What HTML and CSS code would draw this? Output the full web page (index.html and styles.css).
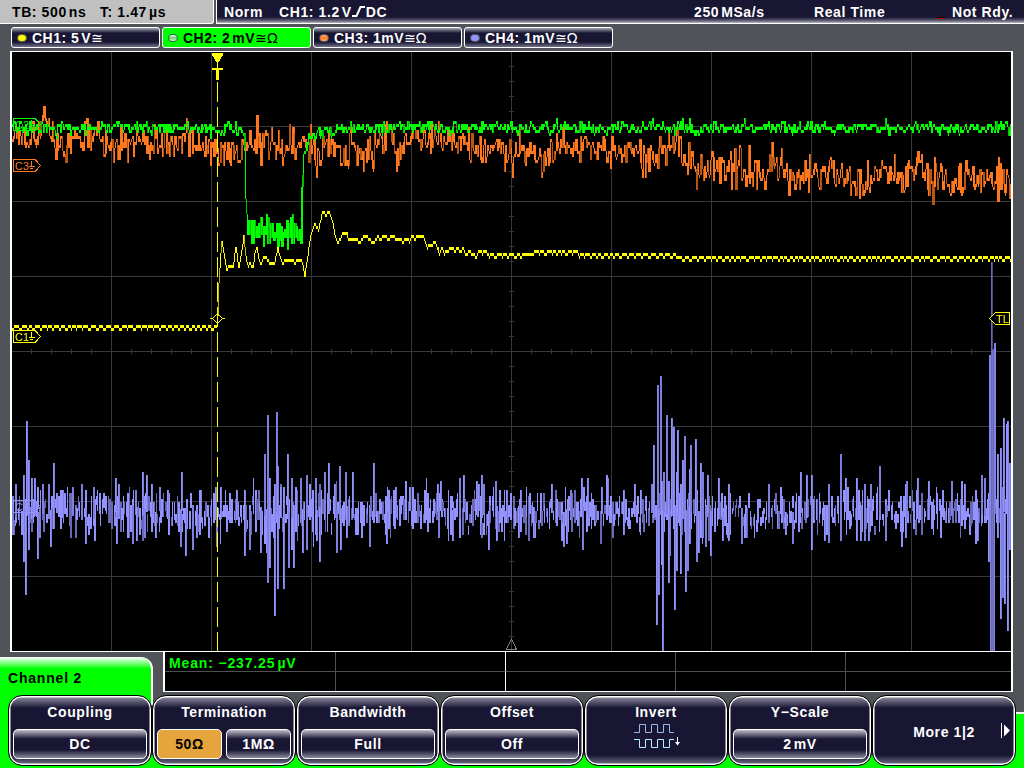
FILE: index.html
```
<!DOCTYPE html>
<html>
<head>
    <meta charset="utf-8">
    <title>Oscilloscope</title>
    <link rel="stylesheet" href="styles.css">
</head>
<body>
    <div class="status">
        <div class="timebase"><span>TB: 500<i></i>ns</span><span>T: 1.47<i></i>µs</span></div>
        <div class="acquisition">
            <span>Norm</span>
            <span class="trigger">CH1: 1.2<i></i>V<svg width="13" height="11" viewBox="0 0 13 11"><path d="M0 10H4.5L8.5 1H13"/></svg>DC</span>
            <span>250<i></i>MSa/s</span>
            <span>Real Time</span>
            <span class="ready"><b class="lamp"></b>Not Rdy.</span>
        </div>
    </div>

    <div class="channels">
        <div class="channel ch1"><b class="led"></b><span>CH1: 5<i></i>V</span><em>≅</em></div>
        <div class="channel ch2 active"><b class="led"></b><span>CH2: 2<i></i>mV</span><em>≅Ω</em></div>
        <div class="channel ch3"><b class="led"></b><span>CH3: 1mV</span><em>≅Ω</em></div>
        <div class="channel ch4"><b class="led"></b><span>CH4: 1mV</span><em>≅Ω</em></div>
    </div>

    <div class="screen">
        <canvas id="traces" width="999" height="599"></canvas>
        <svg class="markers" width="999" height="599" viewBox="12 52 999 599">
            <!-- trigger time -->
            <path class="cursor" d="M217.5 82V651"/>
            <path class="yellow-fill" d="M212 53H223V55L218 63V68H223V70H219V80H216V70H212V68H217V63L212 55Z"/>
            <path class="yellow" d="M217.5 313.5L222.5 318.5L217.5 323.5L212.5 318.5ZM210 318.5H213M222 318.5H225"/>
            <!-- trigger level -->
            <path class="yellow box" d="M989.5 318.5L995.5 312.5H1009.5V324.5H995.5Z"/>
            <text class="yellow-text" x="996" y="323">TL</text>
            <!-- reference point -->
            <path class="reference" d="M511.5 639L516.5 649.5H506.5Z"/>
            <g class="flag green" transform="translate(13 118)">
                <path d="M.5 .5H22L27.5 6.5L22 12.5H.5ZM18.5 2V7M15.5 7.5H21.5M17 9.5H20"/><text x="2" y="10.5">C2</text>
            </g>
            <g class="flag orange" transform="translate(13 159)">
                <path d="M.5 .5H22L27.5 6.5L22 12.5H.5ZM18.5 2V7M15.5 7.5H21.5M17 9.5H20"/><text x="2" y="10.5">C3</text>
            </g>
            <g class="flag yellow" transform="translate(13 330)">
                <path d="M.5 .5H22L27.5 6.5L22 12.5H.5ZM18.5 2V7M15.5 7.5H21.5M17 9.5H20"/><text x="2" y="10.5">C1</text>
            </g>
            <g class="flag blue" transform="translate(13 500)">
                <path d="M.5 .5H22L27.5 6.5L22 12.5H.5ZM18.5 2V7M15.5 7.5H21.5M17 9.5H20"/><text x="2" y="10.5">C4</text>
            </g>
        </svg>
    </div>

    <div class="bottom">
        <div class="menu-title">Channel 2</div>
        <div class="measurements">
            <div class="mean">Mean: −237.25<i></i>µV</div><div></div><div></div><div></div><div></div>
            <div></div><div></div><div></div><div></div><div></div>
        </div>
    </div>

    <div class="softkeys">
        <div class="softkey"><span>Coupling</span><div class="values"><div>DC</div></div></div>
        <div class="softkey"><span>Termination</span><div class="values"><div class="selected">50Ω</div><div>1MΩ</div></div></div>
        <div class="softkey"><span>Bandwidth</span><div class="values"><div>Full</div></div></div>
        <div class="softkey"><span>Offset</span><div class="values"><div>Off</div></div></div>
        <div class="softkey"><span>Invert</span>
            <svg class="wave" width="48" height="27" viewBox="0 0 48 27">
                <path class="normal" d="M0 8.5H5.5V.5H11.5V8.5H17.5V.5H23.5V8.5H29.5V.5H35.5V8.5H40"/>
                <path class="inverted" d="M0 15.5H5.5V23.5H11.5V15.5H17.5V23.5H23.5V15.5H29.5V23.5H35.5V15.5H40"/>
                <path class="arrow" d="M43.5 13V20"/><path class="arrowhead" d="M41 18H46L43.5 21.5Z"/>
            </svg>
        </div>
        <div class="softkey"><span>Y−Scale</span><div class="values"><div>2<i></i>mV</div></div></div>
        <div class="softkey more"><span>More 1|2</span>
            <svg width="9" height="15" viewBox="0 0 9 15"><path d="M.5 0V15" stroke="#fff"/><path d="M3 1.5L9 7.5L3 13.5Z" fill="#fff"/></svg>
        </div>
    </div>

    <script src="script.js"></script>
</body>
</html>
```
FILE: styles.css
```
* {
    box-sizing: border-box;
}

body {
    margin: 0;
    width: 1024px;
    height: 768px;
    overflow: hidden;
    background: #505458;
    color: #fff;
    font: bold 14px/16px "Liberation Sans", Arial, sans-serif;
    letter-spacing: 0.6px;
    white-space: nowrap;
}

/* narrow gap between a number and its unit */
i {
    display: inline-block;
    width: 2px;
}

/* Top status line */
.status {
    display: flex;
    gap: 2px;
    height: 24px;
}

.timebase {
    display: grid;
    grid-template-columns: 88px 1fr;
    width: 214px;
    padding: 4px 0 0 12px;
    color: #000;
    background: #c0c0c0;
    border-right: 1px solid #fff;
    border-bottom: 1px solid #fff;
    border-radius: 0 0 3px 0;
}

.acquisition {
    flex: 1;
    display: grid;
    grid-template-columns: 55px 415px 120px 123px 1fr;
    padding: 4px 0 0 7px;
    background: linear-gradient(#181633 17px, #3a3852 19px, #8b8a99 22px, #c8c7d0 23px);
    border-left: 1px solid #fff;
    border-bottom: 1px solid #fff;
}

.trigger svg {
    margin-right: 1px;
}

.trigger path {
    fill: none;
    stroke: #fff;
    stroke-width: 2;
}

.lamp {
    display: inline-block;
    width: 8px;
    height: 2px;
    margin-right: 7px;
    background: #c00000;
    border-top: 1px solid #000;
    vertical-align: -2px;
}

/* Channel tabs */
.channels {
    display: flex;
    gap: 2px;
    height: 27px;
    padding: 3px 0 3px 11px;
}

.channel {
    display: flex;
    align-items: center;
    width: 149px;
    height: 21px;
    padding-left: 5px;
    border: 1px solid #fff;
    border-radius: 3px;
    background: linear-gradient(#a5a4b2, #181633 5px, #181633 14px, #74738a);
    letter-spacing: 0.5px;
}

.channel.active {
    color: #000;
    background: #0f0;
}

.channel em {
    font: 14px/16px "DejaVu Sans", sans-serif;
    letter-spacing: 0;
}

.led {
    width: 10px;
    height: 8px;
    margin-right: 5px;
    border: 1px solid #555;
    border-radius: 4px;
}

.ch1 .led { background: #ff0; }
.ch2 .led { background: linear-gradient(#fff, #6c6 50%, #dfd); border-color: #264; }
.ch3 .led { background: linear-gradient(#ffb080, #ff781e 50%, #ffb080); }
.ch4 .led { background: #9393ff; }

/* Graticule */
.screen {
    position: relative;
    width: 1003px;
    height: 601px;
    margin-left: 10px;
    border: solid #fff;
    border-width: 1px 2px;
    background: #000;
}

.screen canvas {
    display: block;
}

.markers {
    position: absolute;
    top: 0;
    left: 0;
    shape-rendering: crispEdges;
    letter-spacing: 0;
}

.markers path {
    fill: none;
    stroke-width: 1;
}

.markers text {
    font: 11px "Liberation Sans", Arial, sans-serif;
}

.markers .cursor {
    stroke: #ff0;
    stroke-dasharray: 20 5;
}

.markers .yellow-fill { fill: #ff0; }
.markers .box { fill: #000; }
.markers .yellow { stroke: #ff0; }
.markers .reference { stroke: #808080; }
.yellow-text { fill: #ff0; }
.flag text { stroke: none; }
.green { stroke: #0f0; fill: #0f0; }
.orange { stroke: #ff781e; fill: #ff781e; }
.flag.yellow { fill: #ff0; }
.blue { stroke: #9393ff; fill: #9393ff; }

/* Menu title and measurements */
.bottom {
    display: flex;
    justify-content: space-between;
    height: 43px;
    padding-right: 11px;
}

.menu-title {
    width: 153px;
    height: 48px;
    margin-top: 5px;
    padding: 13px 0 0 8px;
    color: #000;
    background: linear-gradient(#fff, #0f0 12px);
    border-right: 2px solid #fff;
    border-radius: 0 12px 0 0;
    letter-spacing: 0.8px;
}

.measurements {
    display: grid;
    grid-template-columns: 171px 170px 170px 170px 1fr;
    grid-template-rows: 20px 19px;
    width: 850px;
    height: 41px;
    margin-top: -1px;
    border: solid #fff;
    border-width: 1px 2px 1px 2px;
    background: #000;
}

.measurements div {
    border-right: 1px solid #505050;
}

.measurements div:nth-child(-n+5) {
    border-bottom: 1px solid #505050;
}

.measurements div:nth-child(5n+2) {
    border-right-color: #fff;
}

.measurements div:nth-child(5n) {
    border-right: 0;
}

.measurements .mean {
    padding: 3px 0 0 4px;
    color: #0f0;
    letter-spacing: 0.85px;
}

/* Softkeys */
.softkeys {
    display: flex;
    height: 73px;
    padding-left: 8px;
    background:
        linear-gradient(#0f0, #0f0) 0 0 / 12px 100% no-repeat,
        linear-gradient(transparent 17px, #fff 17px, #fff 19px, #0f0 19px) 100% 0 / 9px 100% no-repeat,
        linear-gradient(transparent 60px, #0f0 60px);
}

.softkey {
    position: relative;
    display: flex;
    flex-direction: column;
    align-items: center;
    width: 144px;
    height: 71px;
    padding: 8px 3px 0;
    border: 1px solid #000;
    border-radius: 14px;
    background: linear-gradient(#9897a8, #181633 12px, #181633 59px, #77768b);
    box-shadow: inset 0 0 0 1.5px #fff;
}

.values {
    display: flex;
    gap: 4px;
    width: 134px;
    margin-top: 9px;
}

.values div {
    flex: 1;
    height: 30px;
    padding-top: 6px;
    border: 1.5px solid #fff;
    border-radius: 5px;
    background: linear-gradient(#c0bfca, #181633 9px, #181633 20px, #8b8a9c);
    text-align: center;
}

.values .selected {
    color: #000;
    background: #e6a43c;
}

.wave {
    margin-top: 4px;
    margin-left: 4px;
    fill: none;
}

.wave .normal { stroke: #9fb6e8; }
.wave .inverted { stroke: #b8f0ff; }
.wave .arrow { stroke: #fff; }
.wave .arrowhead { fill: #fff; }

.more {
    padding-top: 28px;
}

.more svg {
    position: absolute;
    top: 27px;
    right: 5px;
}
```
FILE: script.js
```
const ctx = document.getElementById('traces').getContext('2d');
// Screen coordinates, the graticule starts at 12,52
ctx.translate(-12, -52);

let seed = 4711;
function random() {
    seed = (seed * 16807) % 2147483647;
    return seed / 2147483647;
}

function noise() {
    return random() + random() + random() + random() - 2;
}

function interpolate(points, x) {
    for (let i = 1; i < points.length; i++) {
        if (x <= points[i][0]) {
            const a = points[i - 1], b = points[i];
            return a[1] + (b[1] - a[1]) * (x - a[0]) / (b[0] - a[0]);
        }
    }
    return points[points.length - 1][1];
}

function drawGrid() {
    ctx.fillStyle = '#383838';
    for (let x = 111; x < 1011; x += 100) ctx.fillRect(x, 52, 1, 599);
    for (let y = 126; y < 651; y += 75) ctx.fillRect(12, y, 999, 1);
    for (let x = 31; x < 1011; x += 20) ctx.fillRect(x, 349, 1, 5);
    for (let y = 66; y < 651; y += 15) ctx.fillRect(509, y, 5, 1);
}

// One column per sample, joined to the previous sample
function drawTrace(color, dark, wide, valueAt) {
    let last = null;
    for (let x = 12; x < 1011; x++) {
        const y = Math.round(valueAt(x) / 3) * 3;
        if (last === null) last = y;
        const top = Math.min(y, last), bottom = Math.max(y, last);
        ctx.fillStyle = bottom - top > 8 && random() < 0.35 ? dark : color;
        ctx.fillRect(x, top - 2, wide && random() < 0.4 ? 2 : 1, Math.max(3, bottom - top));
        last = y;
    }
}

// [x, top, bottom], 0 leaves that side at the noise level
const bursts = [
    [12,496,535],[15,484,517],[23,475,562],[25,0,595],[26,421,0],[28,460,550],[31,478,0],[34,478,0],[37,0,559],[39,0,538],
    [42,484,0],[48,484,0],[50,0,547],[53,463,529],[56,493,0],[62,490,0],[72,487,0],[81,484,0],[85,0,544],[93,487,0],
    [115,478,0],[116,0,544],[118,484,0],[132,0,544],[135,490,0],[136,0,541],[142,472,0],[144,0,538],[146,475,0],[151,484,0],
    [155,0,538],[159,487,0],[167,490,0],[180,0,547],[181,472,0],[185,0,556],[192,0,550],[196,0,538],[200,490,0],[215,487,0],
    [216,0,547],[220,487,0],[236,490,0],[244,490,556],[249,0,550],[260,0,553],[264,454,0],[266,0,553],[267,415,583],[269,478,568],
    [274,484,616],[276,412,0],[277,466,589],[280,487,0],[283,487,589],[287,454,0],[288,0,568],[291,478,0],[293,0,568],[300,478,0],
    [302,0,553],[306,475,550],[315,478,0],[316,0,541],[319,0,562],[324,472,0],[328,463,0],[334,484,0],[336,0,553],[339,466,0],
    [340,0,550],[345,472,0],[346,0,538],[352,472,0],[369,0,547],[373,463,0],[386,0,544],[395,487,0],[409,487,0],[437,484,0],
    [438,0,538],[440,481,0],[452,0,541],[459,478,0],[463,475,0],[476,481,0],[478,484,0],[481,475,0],[483,484,0],[488,0,550],
    [495,481,0],[496,0,541],[506,490,0],[518,0,538],[520,490,0],[533,0,538],[551,484,0],[563,0,547],[566,0,544],[570,490,0],
    [581,478,0],[582,0,550],[587,478,0],[601,487,0],[607,478,0],[623,490,535],[634,484,0],[640,490,0],[651,484,0],[653,445,0],
    [656,0,625],[657,385,0],[658,0,595],[660,376,0],[661,481,565],[662,0,651],[663,472,0],[666,415,0],[668,481,583],[669,0,556],
    [671,418,0],[673,427,0],[674,0,610],[676,472,571],[677,430,0],[680,484,574],[682,460,0],[684,436,532],[685,0,592],[687,0,571],
    [689,469,544],[690,445,0],[695,439,0],[696,0,562],[698,0,553],[700,463,0],[702,472,538],[705,0,547],[707,475,0],[710,0,556],
    [718,478,0],[722,0,541],[728,484,541],[741,0,544],[745,0,538],[768,484,0],[785,0,535],[792,0,544],[800,472,0],[806,475,0],
    [811,475,550],[824,0,541],[828,484,543],[840,454,541],[845,478,0],[856,478,541],[860,0,541],[864,484,541],[868,0,541],[870,484,0],
    [879,466,0],[885,0,541],[905,484,538],[906,481,0],[917,478,0],[928,481,0],[951,481,0],[964,484,0],[977,0,541],[981,475,0],
    [984,478,0],[988,493,562],[997,454,538],[1000,448,619],[1002,487,598],[1003,418,0],[1004,0,604],[1006,424,0],[1007,421,631],[1009,463,550]
];

function drawBlue() {
    for (let x = 12; x < 1010; x += 1.5) {
        const mid = 512 + noise() * 12;
        const size = 7 + Math.abs(noise()) * 29;
        ctx.fillStyle = random() < 0.3 ? '#6969b7' : '#9393ff';
        ctx.fillRect(Math.floor(x), Math.round((mid - size / 2) / 3) * 3 + 1, random() < 0.4 ? 1 : 2, Math.round(size / 3) * 3);
    }
    for (const [x, top, bottom] of bursts) {
        const y = top || 505 + Math.round(random() * 8);
        const end = bottom || 511 + Math.round(random() * 9);
        ctx.fillStyle = '#7f7fde';
        ctx.fillRect(x, y, 2, end - y);
        if (x % 3) {
            ctx.fillStyle = '#9393ff';
            ctx.fillRect(x, y, 1, end - y);
        }
    }
    // clipped burst at the right edge
    ctx.fillStyle = '#8484e5';
    ctx.fillRect(989, 355, 1, 150);
    ctx.fillRect(990, 355, 1, 296);
    ctx.fillRect(994, 343, 1, 308);
    ctx.fillRect(995, 343, 1, 165);
    ctx.fillStyle = '#6969b7';
    ctx.fillRect(991, 262, 1, 389);
    ctx.fillRect(993, 349, 1, 302);
    ctx.fillStyle = '#494980';
    ctx.fillRect(992, 262, 1, 90);
    ctx.fillStyle = '#7373c8';
    ctx.fillRect(992, 350, 1, 301);
}

const orangeBase = [[12,138],[22,143],[36,140],[41,123],[43,112],[45,130],[50,147],[64,150],[75,139],[95,139],[113,147],[140,144],[165,148],[190,141],[205,147],[220,152],[250,147],
    [280,148],[300,144],[310,148],[316,163],[322,155],[328,144],[335,140],[343,162],[350,142],[356,150],[363,160],[370,148],[380,145],[388,130],[396,162],[405,138],[425,143],
    [440,145],[460,144],[475,150],[510,153],[530,150],[540,158],[560,148],[580,150],[600,151],[620,157],[632,151],[646,168],[653,159],[663,151],[676,151],[690,165],
    [710,168],[730,165],[752,177],[770,171],[785,176],[800,182],[810,177],[817,182],[828,168],[836,171],[857,191],[875,175],[883,170],[900,184],[917,166],[930,183],[947,180],[970,181],[1010,179]];
const orangePeaks = { 43: 109, 86: 121, 256: 118, 271: 128, 292: 130, 119: 162, 162: 159, 219: 166, 260: 168, 282: 168, 344: 168, 356: 168,
    372: 171, 398: 168, 512: 180, 541: 181, 645: 181, 668: 136, 672: 138, 676: 130, 680: 139, 688: 145, 696: 192, 711: 153, 731: 193, 748: 148, 781: 151, 808: 195, 855: 199,
    862: 198, 881: 161, 894: 157, 928: 198, 934: 160, 997: 204, 998: 160, 1009: 201 };

const greenBase = [[12,130],[241,130],[243,136],[244,150],[245,200],[247,232],[299,236],[300,245],[301,190],[303,164],[304,156],[306,147],[308,140],[312,137],[325,135],[340,130],[1010,130]];

const yellowPoints = [[12,328.5],[216,328],[217,318],[218,285],[219,270],[221,242],[223,255],[225,268],[226,273],[228,267],[230,266],[232,270],[235,248],[238,270],[241,253],[243,238],
    [245,258],[247,267],[249,265],[252,270],[254,256],[256,248],[258,260],[260,266],[264,257],[267,262],[270,264],[274,263],[277,250],[280,262],[282,266],[285,260],[288,263],
    [291,261],[294,264],[297,261],[300,262],[302,268],[304,278],[306,264],[308,250],[310,236],[312,230],[314,224],[316,229],[318,230],[320,221],[322,212],[325,216],[328,212],
    [330,219],[332,226],[334,236],[336,243],[340,242],[342,236],[344,233],[346,236],[350,242],[354,240],[358,245],[361,240],[367,239],[371,245],[375,240],[392,239],[400,241],
    [410,240],[416,237],[421,237],[423,242],[426,248],[431,245],[433,243],[435,248],[439,254],[441,251],[444,254],[449,251],[462,251],[465,254],[475,256],[482,253],[490,256],
    [528,255],[550,254],[572,254],[590,257.7],[650,257.7],[665,256],[680,258.5],[700,259],[1010,259.3]];

drawGrid();
drawBlue();
drawTrace('#ff781e', '#b75515', true, x => orangePeaks[x] || interpolate(orangeBase, x) + noise() * 15);
drawTrace('#00ff00', '#00c000', true, x => {
    const y = interpolate(greenBase, x);
    // dense ringing while the signal is low
    if (x > 246 && x < 300) return y + (x % 2 ? 1 : -1) * (3 + random() * 12) + noise() * 4;
    if (x > 242 && x < 303) return y;
    return y + noise() * 6;
});

// least significant bit toggles in short runs
let toggle = 1, run = 3;
drawTrace('#ffff00', '#b7b700', false, x => {
    if (--run <= 0) {
        toggle = -toggle;
        run = 2 + Math.floor(random() * 3);
    }
    return interpolate(yellowPoints, x) + (x < 217 || x > 335 ? toggle * 1.4 : 0);
});
```
